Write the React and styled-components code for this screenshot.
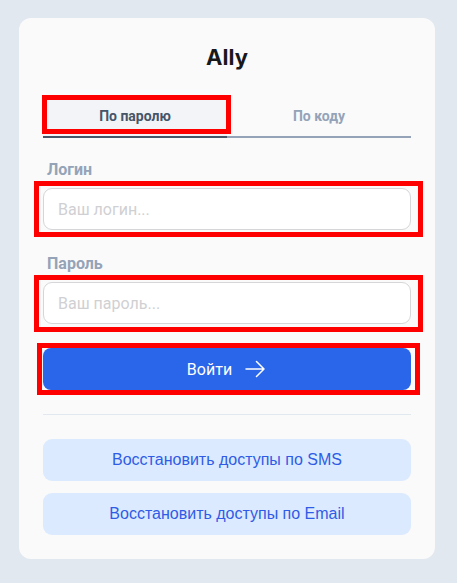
import React from "react";
import styled, { createGlobalStyle } from "styled-components";

const Global = createGlobalStyle`
  html, body { margin: 0; padding: 0; background: #e2e8f0; }
  body { font-family: Roboto, "Noto Sans", sans-serif; }
  * { box-sizing: border-box; }
`;

const Page = styled.div`
  min-height: 583px;
  padding: 18px 22px 0 19px;
`;

const Card = styled.div`
  width: 416px;
  background: #fafafa;
  border-radius: 12px;
  padding: 25px 24px 24px;
  display: flex;
  flex-direction: column;
`;

const Title = styled.h1`
  margin: 0 0 25px;
  font-family: Inter, Roboto, sans-serif;
  font-size: 22px;
  line-height: 28px;
  font-weight: 700;
  color: #18181b;
  text-align: center;
`;

const Marked = styled.div`
  position: relative;
  &::after {
    content: "";
    position: absolute;
    top: ${(p) => p.$t}px;
    right: ${(p) => p.$r}px;
    bottom: ${(p) => p.$b}px;
    left: ${(p) => p.$l}px;
    border: 5px solid #ff0000;
    pointer-events: none;
    z-index: 2;
  }
`;

const Tabs = styled.div`
  display: grid;
  grid-template-columns: 184px 1fr;
`;

const Tab = styled.button`
  height: 42px;
  width: 100%;
  border: none;
  border-bottom: 2px solid ${(p) => (p.$active ? "#475569" : "#94a3b8")};
  background: ${(p) => (p.$active ? "#f2f4f8" : "transparent")};
  color: ${(p) => (p.$active ? "#475569" : "#94a3b8")};
  font-family: Roboto, sans-serif;
  font-weight: 700;
  font-size: 14px;
  padding: 0;
  cursor: pointer;
`;

const Field = styled.div`
  display: flex;
  flex-direction: column;
  gap: 8px;
  margin-top: ${(p) => p.$mt}px;
`;

const Label = styled.label`
  padding-left: 4px;
  font-size: 16px;
  line-height: 20px;
  font-weight: 700;
  color: #94a3b8;
`;

const Input = styled.input`
  display: block;
  width: 100%;
  height: 42px;
  border: 1px solid #d6d6d9;
  border-radius: 9px;
  background: #ffffff;
  padding: 0 14px;
  font-family: Roboto, sans-serif;
  font-size: 16px;
  color: #334155;
  outline: none;
  &::placeholder { color: #d0d0d3; }
`;

const Submit = styled.button`
  width: 100%;
  height: 42px;
  border: none;
  border-radius: 8px;
  background: #2966e9;
  color: #ffffff;
  font-family: Roboto, sans-serif;
  font-size: 16px;
  display: flex;
  align-items: center;
  justify-content: center;
  gap: 11px;
  cursor: pointer;
`;

const SubmitWrap = styled.div`
  margin-top: 24px;
`;

const Divider = styled.hr`
  margin: 24px 0 0;
  border: none;
  height: 1px;
  background: #e2e8f0;
`;

const Recover = styled.button`
  margin-top: ${(p) => p.$mt}px;
  width: 100%;
  height: 42px;
  border: none;
  border-radius: 9px;
  background: #dbeafe;
  color: #2f5ce6;
  font-family: "Liberation Sans", Arial, sans-serif;
  font-size: 16px;
  cursor: pointer;
`;

const Arrow = () => (
  <svg width="24" height="24" viewBox="0 0 24 24" fill="none" stroke="currentColor" strokeWidth="1.5" strokeLinecap="round" strokeLinejoin="round">
    <path d="M13.5 4.5 21 12m0 0-7.5 7.5M21 12H3" />
  </svg>
);

export default function App() {
  return (
    <>
      <Global />
      <Page>
        <Card>
          <Title>Ally</Title>
          <Tabs>
            <Marked $t={-1} $r={-4} $b={4} $l={-1}>
              <Tab $active>По паролю</Tab>
            </Marked>
            <Tab>По коду</Tab>
          </Tabs>
          <Field $mt={22}>
            <Label>Логин</Label>
            <Marked $t={-7} $r={-12} $b={-7} $l={-9}>
              <Input placeholder="Ваш логин..." />
            </Marked>
          </Field>
          <Field $mt={24}>
            <Label>Пароль</Label>
            <Marked $t={-7} $r={-12} $b={-8} $l={-9}>
              <Input type="password" placeholder="Ваш пароль..." />
            </Marked>
          </Field>
          <SubmitWrap>
            <Marked $t={-5} $r={-9} $b={-5} $l={-6}>
              <Submit>
                <span>Войти</span>
                <Arrow />
              </Submit>
            </Marked>
          </SubmitWrap>
          <Divider />
          <Recover $mt={24}>Восстановить доступы по SMS</Recover>
          <Recover $mt={12}>Восстановить доступы по Email</Recover>
        </Card>
      </Page>
    </>
  );
}
